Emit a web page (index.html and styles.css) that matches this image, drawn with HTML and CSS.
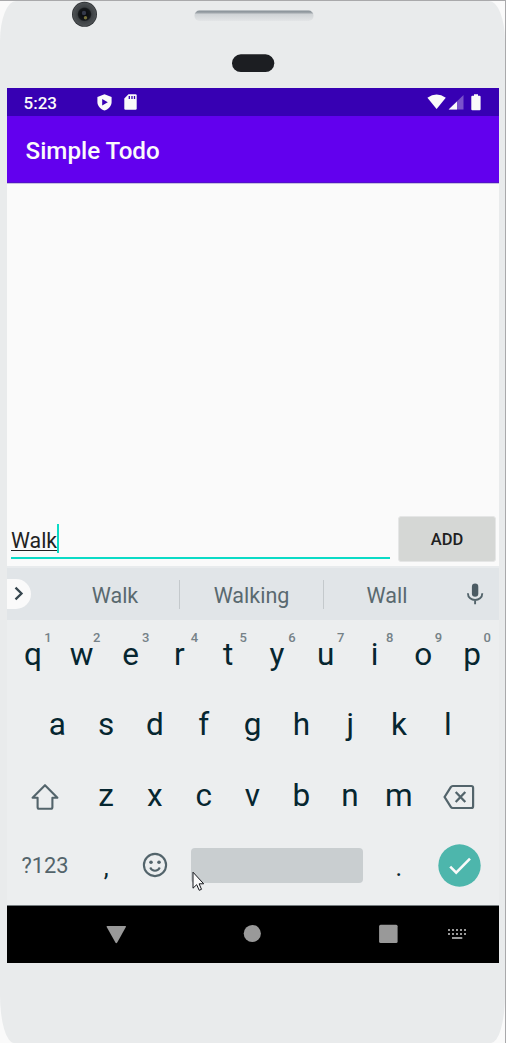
FILE: index.html
```html
<!DOCTYPE html>
<html lang="en">
<head>
<meta charset="utf-8">
<title>Simple Todo</title>
<link rel="stylesheet" href="styles.css">
</head>
<body>
<div class="stage">
<div class="phone">
  <div class="bezel-top">
    <svg class="hardware" width="505" height="87" viewBox="0 1 505 87">
      <defs>
        <radialGradient id="lens"><stop offset="0" stop-color="#080a0d"/><stop offset=".48" stop-color="#15181b"/><stop offset=".58" stop-color="#3d4144"/><stop offset=".9" stop-color="#4c5053"/><stop offset="1" stop-color="#232629"/></radialGradient>
        <linearGradient id="grille" x1="0" y1="0" x2="0" y2="1"><stop offset="0" stop-color="#848d94"/><stop offset=".22" stop-color="#9ea5aa"/><stop offset=".35" stop-color="#cfd3d6"/><stop offset="1" stop-color="#e3e5e7"/></linearGradient>
      </defs>
      <circle cx="84.5" cy="14.3" r="12.5" fill="url(#lens)"/>
      <circle cx="84" cy="13" r="2.2" fill="#34394a"/>
      <circle cx="85.5" cy="17.8" r="1.7" fill="#77713b"/>
      <rect x="194.5" y="10.5" width="119" height="10.5" rx="5" fill="url(#grille)"/>
      <rect x="232" y="54.3" width="42.3" height="17.7" rx="8.8" fill="#1c1e22"/>
    </svg>
  </div>
  <main class="screen">
    <div class="status-bar">
      <span class="clock">5:23</span>
      <svg class="shield" width="15" height="17" viewBox="0 0 15 17"><path fill="#fafafa" d="M7.5.3 14.6 3v5c0 4-3 7-7.1 8.6C3.400 15 .4 12 .4 8V3z"/><path fill="#3700b3" d="M5.200 4.900v6.500l5.600-3.250z"/></svg>
      <svg class="sdcard" width="13" height="16" viewBox="0 0 13 16"><path fill="#fafafa" d="M4.500.3h7q1.200 0 1.200 1.200v13q0 1.200-1.200 1.200H1.500Q.3 15.700.3 14.500V4.600z"/><path stroke="#3700b3" stroke-width="1.300" d="M5.300 2v3M8 2v3m2.500-3v3"/></svg>
      <svg class="signals" width="55" height="17" viewBox="0 0 55 17"><path fill="#fafafa" d="M.4 3.700q9.200-6.500 18.400 0L9.600 15z"/><path fill="#7a52cb" d="M36.500 1v14.600H21.600z"/><path fill="#fafafa" d="M30 7.400v8.200h-8.400z"/><path fill="#fafafa" d="M47 1.700V.3h4v1.400h1.600q1 0 1 1v12.600q0 1-1 1h-7.300q-1 0-1-1V2.700q0-1 1-1z"/></svg>
    </div>
    <header class="app-bar">Simple Todo</header>
    <section class="todo-list"></section>
    <div class="entry">
      <div class="field"><span class="typed">Walk</span><span class="caret"></span></div>
      <div class="add">ADD</div>
    </div>
    <div class="suggestions">
      <div class="expand"><svg width="24" height="29" viewBox="0 0 24 29"><path d="m8.500 8.700 6 5.800-6 5.800" fill="none" stroke="#37474f" stroke-width="2.300"/></svg></div>
      <span class="word first">Walk</span><span class="word second">Walking</span><span class="word third">Wall</span>
      <svg class="mic" width="18" height="22" viewBox="0 0 18 22"><rect x="5.900" y=".6" width="6.400" height="13.200" rx="3.200" fill="#4b5b63"/><path d="M1.900 10.200c0 9 14.400 9 14.400 0M9.100 17v4.300" fill="none" stroke="#53646b" stroke-width="1.900"/></svg>
    </div>
    <div class="keyboard">
      <div class="row r1">
        <div class="key">q<sup>1</sup></div><div class="key">w<sup>2</sup></div><div class="key">e<sup>3</sup></div><div class="key">r<sup>4</sup></div><div class="key">t<sup>5</sup></div><div class="key">y<sup>6</sup></div><div class="key">u<sup>7</sup></div><div class="key">i<sup>8</sup></div><div class="key">o<sup>9</sup></div><div class="key">p<sup>0</sup></div>
      </div>
      <div class="row r2">
        <div class="key">a</div><div class="key">s</div><div class="key">d</div><div class="key">f</div><div class="key">g</div><div class="key">h</div><div class="key">j</div><div class="key">k</div><div class="key">l</div>
      </div>
      <div class="row r3">
        <div class="key wide"><svg width="30" height="30" viewBox="0 0 30 30"><path d="M15 3.200 27.400 15.700h-5v9.600q0 1.500-1.500 1.500H9.100q-1.500 0-1.500-1.500v-9.600h-5z" fill="none" stroke="#53646b" stroke-width="2.100" stroke-linejoin="round"/></svg></div>
        <div class="key">z</div><div class="key">x</div><div class="key">c</div><div class="key">v</div><div class="key">b</div><div class="key">n</div><div class="key">m</div>
        <div class="key wide erase"><svg width="32" height="26" viewBox="0 0 32 26"><path d="M9.800 2h18.500q1.800 0 1.800 1.800v18.400q0 1.800-1.800 1.800H9.800q-1.300 0-2-1.100L1.600 13l6.200-9.900Q8.500 2 9.800 2z" fill="none" stroke="#53646b" stroke-width="2.200"/><path d="m12.700 8 9.600 10m0-10-9.600 10" stroke="#53646b" stroke-width="2.300"/></svg></div>
      </div>
      <div class="row r4">
        <div class="key wide symbols">?123</div>
        <div class="key comma">,</div>
        <div class="key"><svg width="26" height="26" viewBox="0 0 26 26"><circle cx="13" cy="13" r="11.100" fill="none" stroke="#53646b" stroke-width="2.100"/><circle cx="9" cy="10.300" r="1.800" fill="#53646b"/><circle cx="17" cy="10.300" r="1.800" fill="#53646b"/><path d="M8.200 15.500c2 4.200 7.600 4.200 9.600 0" fill="none" stroke="#53646b" stroke-width="2"/></svg></div>
        <div class="space"></div>
        <div class="key period">.</div>
        <div class="key wide"><svg width="43" height="43" viewBox="0 0 43 43"><circle cx="21.500" cy="21.500" r="21.200" fill="#4db6ac"/><path d="m12.200 22.700 6 6 13.800-14" fill="none" stroke="#fafafa" stroke-width="2.600"/></svg></div>
      </div>
    </div>
    <nav class="nav-bar">
      <svg width="492" height="57" viewBox="0 0 492 57"><g fill="#999"><path d="M100.400 20h17.800q1.300 0 .7 1.100l-8.700 15.400q-.9 1.500-1.800 0l-8.700-15.400q-.6-1.100.7-1.100z"/><circle cx="245.300" cy="27.500" r="8.600"/><rect x="372.100" y="18.700" width="18.500" height="18.200" rx="1.500"/></g><g stroke="#999" stroke-width="2" fill="none"><path stroke-dasharray="2 2" d="M441 24h18M441 28h18"/><path d="M445 32h10.300"/></g></svg>
    </nav>
  </main>
</div>
<svg class="pointer" width="13" height="21" viewBox="0 0 13 21"><path d="M1 1.200v16l3.700-3.500 2.500 5.600 2.300-1-2.400-5.500h4.600z" fill="#fafafa" stroke="#15171c" stroke-width="1"/></svg>
</div>
</body>
</html>
```
FILE: styles.css
```css
* { box-sizing: border-box; }
body { margin: 0; font-family: Roboto, "Liberation Sans", sans-serif; }
.stage {
  position: relative;
  width: 506px;
  height: 1043px;
  border-top: 1px solid #a9a9ab;
  border-right: 1px solid #a9a9ab;
  background: #fafafa;
  overflow: hidden;
}
.phone {
  height: 1042px;
  background: #e9ebec;
  border-radius: 16px 16px 14px 14px / 40px 40px 48px 48px;
}
.bezel-top { height: 87px; }
.hardware { display: block; }
.screen { width: 492px; height: 875px; margin-left: 7px; background: #fafafa; display: flex; flex-direction: column; }
.status-bar { height: 28px; padding: 0 17px 0 16.500px; background: #3700b3; display: flex; align-items: center; }
.clock { width: 73px; color: #fafafa; font-size: 17px; font-weight: 500; line-height: 28px; padding-top: 2px; }
.sdcard { margin-left: 12.500px; }
.signals { margin-left: auto; }
.app-bar { height: 67px; padding: 2px 0 0 18.500px; background: #6200ee; border-bottom: 1px solid #5212ca; color: #fafafa; font-size: 24.200px; font-weight: 500; line-height: 66px; box-shadow: 0 1px 0 #c8bfe0; }
.todo-list { height: 331px; }
.entry { height: 52px; display: flex; align-items: flex-start; padding: 1px 3px 0 4px; }
.field { width: 379px; height: 44px; border-bottom: 2px solid #0adbc6; display: flex; align-items: center; }
.typed { color: #222; font-size: 21.300px; line-height: 30px; border-bottom: 1px solid #222; margin-top: 5px; height: 25px; }
.caret { width: 2px; height: 29px; background: #0adbc6; margin-top: 5px; }
.add { width: 98px; height: 46px; margin: 1px 0 0 auto; border: 1px solid #e5e6e6; border-radius: 3px; background: #d5d7d5; color: #202020; font-size: 16.500px; font-weight: 500; line-height: 45px; text-align: center; }
.suggestions { height: 54px; background: #e1e5e8; border-top: 2px solid #e8ebed; display: flex; align-items: center; }
.expand { width: 24px; height: 30px; background: #fafafa; border-radius: 0 15px 15px 0; }
.word { height: 29px; line-height: 31px; font-size: 21.500px; color: #59696f; text-align: center; }
.first { width: 173px; padding-left: 20px; border-right: 1px solid #c4c9cc; }
.expand + .first { width: 149px; }
.second { width: 144px; border-right: 1px solid #c4c9cc; }
.third { width: 126px; }
.mic { margin-left: 16px; }
.keyboard { height: 285px; background: #eceeef; color: #062630; font-size: 31.500px; }
.row { display: flex; padding: 0 2.500px 0 1.500px; }
.r1 { height: 69px; }
.r2 { height: 71px; padding-left: 26px; }
.r3 { height: 70px; }
.r4 { height: 71px; }
.key { position: relative; width: 48.800px; display: flex; align-items: center; justify-content: center; }
.key sup { position: absolute; top: 10px; left: 32.500px; width: 14px; font-size: 13px; line-height: 16px; font-weight: 500; color: #758187; text-align: center; }
.wide { width: 73.200px; }
.r3 .wide svg { margin-top: 3px; }
.r3 .erase svg { margin-right: 2px; margin-top: 4px; }
.r4 .key svg { margin-bottom: 1px; }
.symbols { font-size: 21.800px; color: #53646b; }
.comma, .period { font-size: 25px; padding-top: 3px; }
.space { width: 172px; height: 35px; margin: 18px 11.600px 0; background: #c9ced0; border-radius: 4px; }
.nav-bar { height: 58px; background: #000; border-top: 1px solid #747b7e; }
.nav-bar svg { display: block; }
.pointer { position: absolute; left: 192px; top: 870px; }
```
